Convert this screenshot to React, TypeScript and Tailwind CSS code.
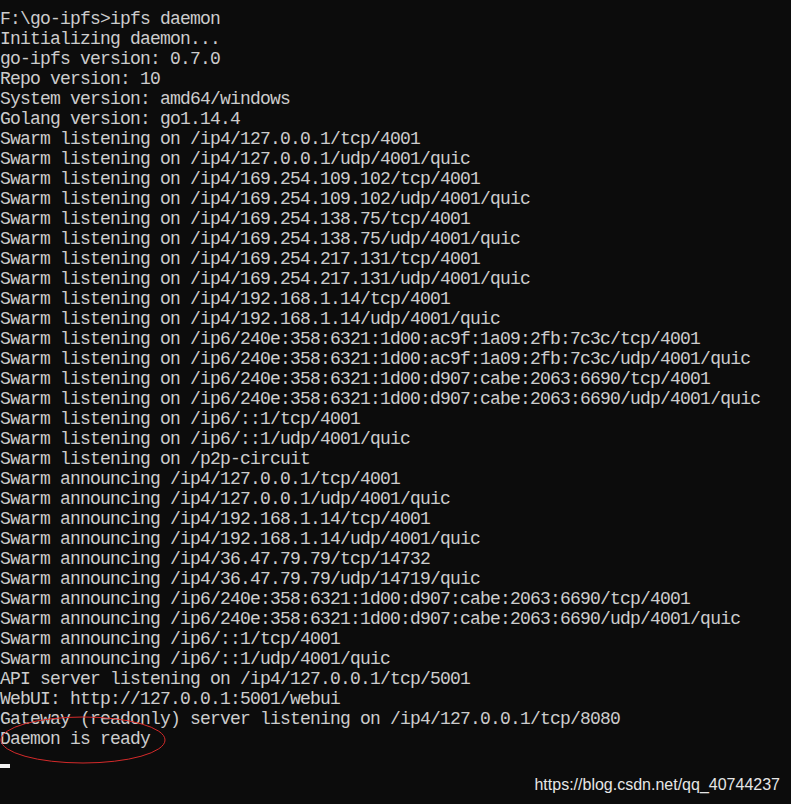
const lines = [
  "F:\\go-ipfs>ipfs daemon",
  "Initializing daemon...",
  "go-ipfs version: 0.7.0",
  "Repo version: 10",
  "System version: amd64/windows",
  "Golang version: go1.14.4",
  "Swarm listening on /ip4/127.0.0.1/tcp/4001",
  "Swarm listening on /ip4/127.0.0.1/udp/4001/quic",
  "Swarm listening on /ip4/169.254.109.102/tcp/4001",
  "Swarm listening on /ip4/169.254.109.102/udp/4001/quic",
  "Swarm listening on /ip4/169.254.138.75/tcp/4001",
  "Swarm listening on /ip4/169.254.138.75/udp/4001/quic",
  "Swarm listening on /ip4/169.254.217.131/tcp/4001",
  "Swarm listening on /ip4/169.254.217.131/udp/4001/quic",
  "Swarm listening on /ip4/192.168.1.14/tcp/4001",
  "Swarm listening on /ip4/192.168.1.14/udp/4001/quic",
  "Swarm listening on /ip6/240e:358:6321:1d00:ac9f:1a09:2fb:7c3c/tcp/4001",
  "Swarm listening on /ip6/240e:358:6321:1d00:ac9f:1a09:2fb:7c3c/udp/4001/quic",
  "Swarm listening on /ip6/240e:358:6321:1d00:d907:cabe:2063:6690/tcp/4001",
  "Swarm listening on /ip6/240e:358:6321:1d00:d907:cabe:2063:6690/udp/4001/quic",
  "Swarm listening on /ip6/::1/tcp/4001",
  "Swarm listening on /ip6/::1/udp/4001/quic",
  "Swarm listening on /p2p-circuit",
  "Swarm announcing /ip4/127.0.0.1/tcp/4001",
  "Swarm announcing /ip4/127.0.0.1/udp/4001/quic",
  "Swarm announcing /ip4/192.168.1.14/tcp/4001",
  "Swarm announcing /ip4/192.168.1.14/udp/4001/quic",
  "Swarm announcing /ip4/36.47.79.79/tcp/14732",
  "Swarm announcing /ip4/36.47.79.79/udp/14719/quic",
  "Swarm announcing /ip6/240e:358:6321:1d00:d907:cabe:2063:6690/tcp/4001",
  "Swarm announcing /ip6/240e:358:6321:1d00:d907:cabe:2063:6690/udp/4001/quic",
  "Swarm announcing /ip6/::1/tcp/4001",
  "Swarm announcing /ip6/::1/udp/4001/quic",
  "API server listening on /ip4/127.0.0.1/tcp/5001",
  "WebUI: http://127.0.0.1:5001/webui",
  "Gateway (readonly) server listening on /ip4/127.0.0.1/tcp/8080",
  "Daemon is ready",
];

export default function App() {
  return (
    <div className="relative h-[804px] w-full overflow-hidden bg-[#0c0c0c]">
      <div className="flex flex-col pt-[9px] font-['Liberation_Mono',monospace] text-[18px] tracking-[-0.8px] leading-[20px] text-[#cccccc] whitespace-pre">
        {lines.map((line, i) => (
          <div key={i} className="h-[20px]">
            {line}
          </div>
        ))}
        {/* blinking cursor */}
        <div className="flex h-[20px] items-end pb-[1px]">
          <div className="h-[4px] w-[10px] bg-[#f2f2f2]" />
        </div>
      </div>

      {/* red mark around the last line */}
      <svg
        className="absolute left-0 top-[715px]"
        width="170"
        height="52"
        viewBox="0 0 170 52"
      >
        <ellipse cx="83" cy="25" rx="82" ry="23" fill="none" stroke="#d42a2a" strokeWidth="1" />
      </svg>

      <div className="absolute right-[11px] top-[775px] font-['Liberation_Sans',Arial,sans-serif] text-[16px] leading-[20px] text-[#e6e6e6]">
        https://blog.csdn.net/qq_40744237
      </div>
    </div>
  );
}
